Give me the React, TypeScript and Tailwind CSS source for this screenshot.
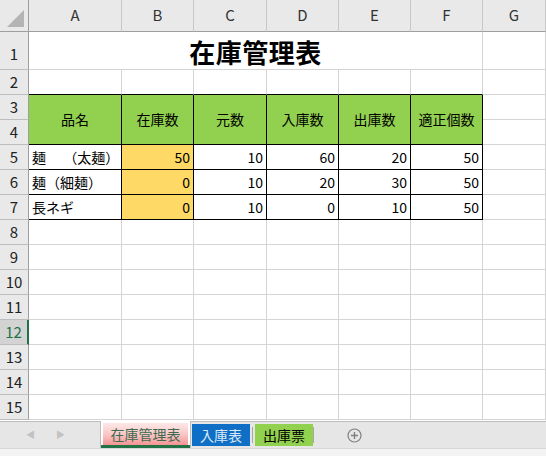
import React from "react";

const FONT = { fontFamily: '"Noto Sans CJK JP", "Noto Sans", sans-serif' };

const cols = ["A", "B", "C", "D", "E", "F", "G"];

const rows = [
  { name: "麺　 （太麺）", stock: 50, base: 10, inQty: 60, outQty: 20, proper: 50 },
  { name: "麺（細麺）", stock: 0, base: 10, inQty: 20, outQty: 30, proper: 50 },
  { name: "長ネギ", stock: 0, base: 10, inQty: 0, outQty: 10, proper: 50 },
];

const heads = ["品名", "在庫数", "元数", "入庫数", "出庫数", "適正個数"];

function RowHead({ n }: { n: number }) {
  const selected = n === 12;
  const align = n === 1 ? " items-end pb-[4px]" : " items-center";
  return (
    <div
      className={
        (selected
          ? "flex justify-center bg-[#d3d3d3] border-b border-[#bdbdbd] border-r-2 border-r-[#217346] text-[15px] text-[#217346]"
          : "flex justify-center bg-[#e9e9e9] border-b border-[#bdbdbd] border-r border-r-[#9e9e9e] text-[15px] text-[#222]") + align
      }
    >
      {n}
    </div>
  );
}

function Cell({ className = "", children }: { className?: string; children?: React.ReactNode }) {
  return (
    <div className={"flex items-center border-r border-b border-[#d4d4d4] text-[14px] text-black " + className}>
      {children}
    </div>
  );
}

export default function App() {
  return (
    <div className="w-[546px] h-[456px] overflow-hidden bg-white" style={FONT}>
      <div className="grid grid-cols-[29px_93px_72px_73px_72px_72px_72px_1fr] grid-rows-[32px_38px_repeat(14,25px)] h-[420px]">
        {/* corner */}
        <div className="relative bg-[#e9e9e9] border-r border-b border-[#9e9e9e]">
          <div className="absolute right-[4px] bottom-[4px] w-0 h-0 border-l-[17px] border-l-transparent border-b-[17px] border-b-[#b4b4b4]" />
        </div>
        {cols.map((c) => (
          <div
            key={c}
            className="flex items-center justify-center bg-[#e9e9e9] border-r border-[#c8c8c8] border-b border-b-[#9e9e9e] text-[15px] text-[#333]"
          >
            {c}
          </div>
        ))}

        {/* row 1 */}
        <RowHead n={1} />
        <Cell className="col-span-6 justify-center pt-[2px]">
          <span className="text-[26px] font-bold tracking-[0.5px]">在庫管理表</span>
        </Cell>
        <Cell />

        {/* row 2 */}
        <RowHead n={2} />
        {[0, 1, 2, 3, 4, 5].map((i) => (
          <Cell key={i} className="border-b-black" />
        ))}
        <Cell />

        {/* rows 3-4 header */}
        <RowHead n={3} />
        {heads.map((h) => (
          <Cell key={h} className="row-span-2 justify-center bg-[#92d050] border-r-black border-b-black text-[#1e1e1e]">
            {h}
          </Cell>
        ))}
        <Cell />
        <RowHead n={4} />
        <Cell />

        {/* rows 5-7 data */}
        {rows.map((r, i) => (
          <React.Fragment key={i}>
            <RowHead n={5 + i} />
            <Cell className="pl-[3px] whitespace-pre border-r-black border-b-black">{r.name}</Cell>
            <Cell className="justify-end pr-[3px] bg-[#ffd966] border-r-black border-b-black">{r.stock}</Cell>
            <Cell className="justify-end pr-[3px] border-r-black border-b-black">{r.base}</Cell>
            <Cell className="justify-end pr-[3px] border-r-black border-b-black">{r.inQty}</Cell>
            <Cell className="justify-end pr-[3px] border-r-black border-b-black">{r.outQty}</Cell>
            <Cell className="justify-end pr-[3px] border-r-black border-b-black">{r.proper}</Cell>
            <Cell />
          </React.Fragment>
        ))}

        {/* rows 8-15 empty */}
        {[8, 9, 10, 11, 12, 13, 14, 15].map((n) => (
          <React.Fragment key={n}>
            <RowHead n={n} />
            {cols.map((c) => (
              <Cell key={c} />
            ))}
          </React.Fragment>
        ))}
      </div>

      {/* sheet tabs */}
      <div className="h-[27px] mt-[1px] flex items-stretch bg-[#e6e6e6] border-t border-[#bcbcbc]">
        <div className="w-[100px] flex items-center pl-[26px] gap-[21px] text-[9px] text-[#c2c2c2]">
          <span>◀</span>
          <span>▶</span>
        </div>
        <div className="w-[91px] -mt-px bg-white border-x border-[#bcbcbc] flex flex-col px-[2px] pt-[2px]">
          <div className="flex-1 flex items-center justify-center bg-gradient-to-b from-[#fce8e8] via-[#f9c8c8] to-[#f29494] text-[14px] text-[#3e6a4d]">
            在庫管理表
          </div>
          <div className="h-[3px] -mx-[2px] bg-[#217346]" />
        </div>
        <div className="w-[58px] ml-[1px] mt-[2px] mb-[2px] bg-[#0f6fc6] flex items-center justify-center text-[14px] text-[#dbe9f7]">
          入庫表
        </div>
        <div className="w-px my-[5px] ml-[2px] bg-[#a8a8a8]" />
        <div className="w-[58px] ml-[2px] mt-[2px] mb-[2px] bg-[#92d050] flex items-center justify-center text-[14px] text-black">
          出庫票
        </div>
        <div className="w-px my-[5px] bg-[#a8a8a8]" />
        <div className="flex items-center pl-[33px]">
          <svg width="15" height="15" viewBox="0 0 15 15">
            <circle cx="7.5" cy="7.5" r="6.5" fill="none" stroke="#808080" strokeWidth="1.2" />
            <path d="M7.5 4v7M4 7.5h7" stroke="#808080" strokeWidth="1.4" />
          </svg>
        </div>
      </div>
      <div className="h-[8px] bg-[#f3f3f3] border-t border-[#d6d6d6]" />
    </div>
  );
}
